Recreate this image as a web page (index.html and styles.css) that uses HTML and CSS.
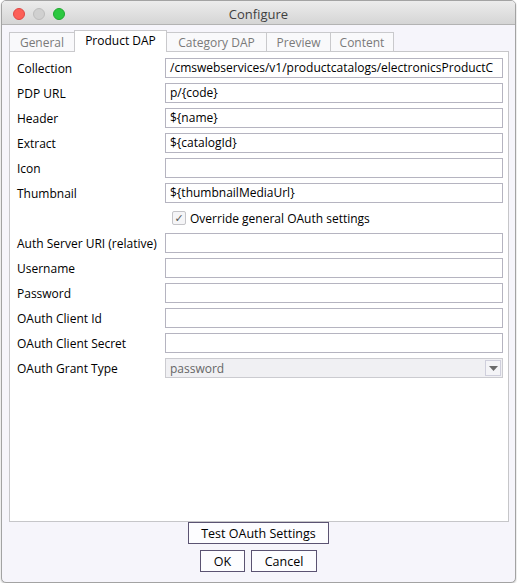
FILE: index.html
```html
<!DOCTYPE html>
<html>
<head>
<meta charset="utf-8">
<link rel="stylesheet" href="styles.css">
</head>
<body>
<div class="window">
  <div class="titlebar">
    <div class="lights">
      <span class="light close"></span>
      <span class="light min"></span>
      <span class="light max"></span>
    </div>
    <div class="title">Configure</div>
  </div>
  <div class="content">
    <div class="tabs">
      <div class="tab t-general">General</div>
      <div class="tab t-product selected">Product DAP</div>
      <div class="tab t-category">Category DAP</div>
      <div class="tab t-preview">Preview</div>
      <div class="tab t-content">Content</div>
    </div>
    <div class="panel">
      <div class="form">
        <div class="label">Collection</div>
        <div class="field">/cmswebservices/v1/productcatalogs/electronicsProductC</div>
        <div class="label">PDP URL</div>
        <div class="field">p/{code}</div>
        <div class="label">Header</div>
        <div class="field">${name}</div>
        <div class="label">Extract</div>
        <div class="field">${catalogId}</div>
        <div class="label">Icon</div>
        <div class="field"></div>
        <div class="label">Thumbnail</div>
        <div class="field">${thumbnailMediaUrl}</div>
        <div class="spacer"></div>
        <div class="check-row">
          <span class="checkbox">&#10003;</span>
          <span class="check-label">Override general OAuth settings</span>
        </div>
        <div class="label">Auth Server URI (relative)</div>
        <div class="field"></div>
        <div class="label">Username</div>
        <div class="field"></div>
        <div class="label">Password</div>
        <div class="field"></div>
        <div class="label">OAuth Client Id</div>
        <div class="field"></div>
        <div class="label">OAuth Client Secret</div>
        <div class="field"></div>
        <div class="label">OAuth Grant Type</div>
        <div class="combo">
          <span class="combo-text">password</span>
          <span class="combo-arrow"><svg width="9" height="5" viewBox="0 0 9 5"><polygon points="0,0 9,0 4.5,5" fill="#6b6b6b"/></svg></span>
        </div>
      </div>
    </div>
    <div class="actions">
      <div class="btn btn-test">Test OAuth Settings</div>
      <div class="btn-row">
        <div class="btn btn-ok">OK</div>
        <div class="btn btn-cancel">Cancel</div>
      </div>
    </div>
  </div>
</div>
</body>
</html>
```
FILE: styles.css
```css
html, body {
  margin: 0;
  padding: 0;
  background: #ffffff;
}
body {
  font-family: "Open Sans", "DejaVu Sans", sans-serif;
  font-size: 12px;
  color: #000;
}
.window {
  box-sizing: border-box;
  margin-left: 1px;
  width: 515px;
  height: 583px;
  border: 1px solid #a3a3a3;
  border-radius: 5px;
  background: #f6f5fb;
  overflow: hidden;
  box-shadow: 0 1px 2px rgba(0,0,0,0.25);
}
.titlebar {
  height: 23px;
  border-bottom: 1px solid #b3b3b3;
  background: linear-gradient(#ececec, #d5d5d5);
  display: flex;
  align-items: center;
  justify-content: center;
  position: relative;
}
.lights {
  position: absolute;
  left: 11px;
  top: 7px;
  display: flex;
  gap: 8px;
}
.light {
  width: 12px;
  height: 12px;
  border-radius: 50%;
  box-sizing: border-box;
}
.close { background: #fc5f57; border: 1px solid #df4744; }
.min { background: #d0d0d0; border: 1px solid #bdbdbd; }
.max { background: #2cc840; border: 1px solid #1fa82f; }
.title {
  font-size: 13px;
  color: #3f3f3f;
  margin-top: 3px;
}
.content {
  padding: 5px 6px 0 7px;
}
.tabs {
  display: flex;
  align-items: flex-end;
  height: 22px;
  margin-bottom: -1px;
  position: relative;
  z-index: 1;
}
.tab {
  box-sizing: border-box;
  height: 20px;
  border: 1px solid #c9c9cc;
  background: #f9f9fb;
  color: #7a7a7a;
  display: flex;
  align-items: center;
  justify-content: center;
  margin-left: -1px;
  padding-top: 1px;
}
.t-general { width: 66px; margin-left: 0; }
.t-product { width: 93px; }
.t-category { width: 101px; }
.t-preview { width: 65px; }
.t-content { width: 64px; }
.tab.selected {
  height: 22px;
  background: #ffffff;
  border-bottom: none;
  color: #000;
  padding-top: 0;
  padding-bottom: 2px;
}
.panel {
  box-sizing: border-box;
  width: 500px;
  height: 471px;
  border: 1px solid #c6c6c9;
  background: #ffffff;
  padding: 6px 5px 0 7px;
}
.form {
  display: grid;
  grid-template-columns: 148px 1fr;
  grid-auto-rows: 20px;
  row-gap: 5px;
  align-items: center;
}
.label {
  white-space: nowrap;
  color: #000;
}
.field {
  box-sizing: border-box;
  height: 20px;
  border: 1px solid #b5b4c0;
  background: #fff;
  padding: 0 4px;
  line-height: 18px;
  white-space: nowrap;
  overflow: hidden;
  color: #000;
}
.check-row {
  display: flex;
  align-items: center;
  padding-left: 7px;
}
.checkbox {
  box-sizing: border-box;
  width: 14px;
  height: 14px;
  border: 1px solid #c4c4c8;
  background: #f5f5f7;
  border-radius: 2px;
  font-size: 11px;
  line-height: 12px;
  text-align: center;
  color: #555;
  margin-right: 4px;
}
.check-label { color: #000; }
.combo {
  box-sizing: border-box;
  height: 20px;
  border: 1px solid #cbcbd0;
  background: #f0f0f3;
  display: flex;
  align-items: center;
  justify-content: space-between;
  padding: 0 1px 0 4px;
}
.combo-text { color: #666; }
.combo-arrow {
  box-sizing: border-box;
  width: 16px;
  height: 16px;
  border: 1px solid #cfcfdc;
  background: #f4f4f7;
  display: flex;
  align-items: center;
  justify-content: center;
}
.actions {
  display: flex;
  flex-direction: column;
  align-items: center;
  gap: 6px;
  padding-right: 1px;
}
.btn {
  box-sizing: border-box;
  height: 22px;
  border: 1px solid #5b5372;
  background: #fdfdff;
  color: #000;
  font-size: 12.5px;
  display: flex;
  align-items: center;
  justify-content: center;
}
.btn-test { width: 141px; }
.btn-row {
  display: flex;
  gap: 6px;
}
.btn-ok { width: 45px; }
.btn-cancel { width: 66px; }
```
